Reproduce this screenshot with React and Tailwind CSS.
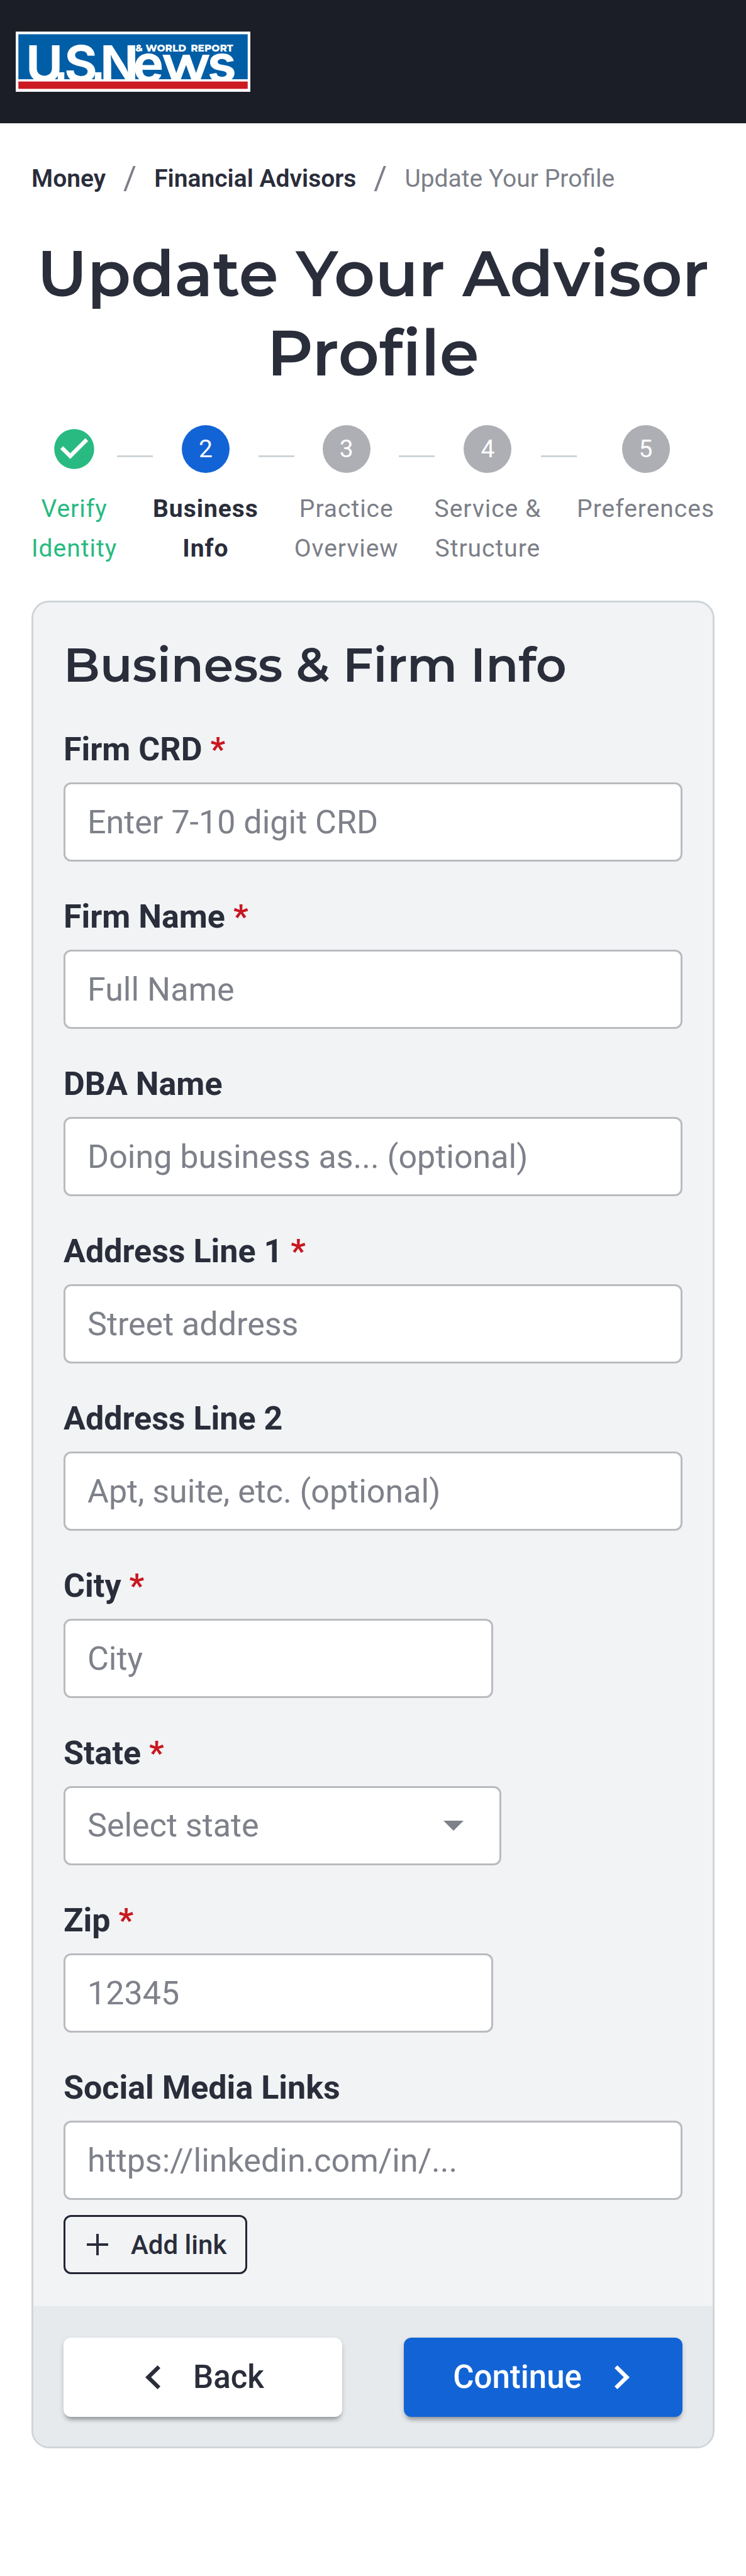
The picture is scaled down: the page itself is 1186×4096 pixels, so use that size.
import React from 'react';

const steps = [
  { label: 'Verify Identity', lines: ['Verify', 'Identity'], status: 'done' },
  { label: 'Business Info', lines: ['Business', 'Info'], status: 'current' },
  { label: 'Practice Overview', lines: ['Practice', 'Overview'], status: 'upcoming' },
  { label: 'Service & Structure', lines: ['Service &', 'Structure'], status: 'upcoming' },
  { label: 'Preferences', lines: ['Preferences'], status: 'upcoming' },
];

const fields = [
  { id: 'firmCrd', label: 'Firm CRD', placeholder: 'Enter 7-10 digit CRD', required: true },
  { id: 'firmName', label: 'Firm Name', placeholder: 'Full Name', required: true },
  { id: 'dbaName', label: 'DBA Name', placeholder: 'Doing business as... (optional)' },
  { id: 'address1', label: 'Address Line 1', placeholder: 'Street address', required: true },
  { id: 'address2', label: 'Address Line 2', placeholder: 'Apt, suite, etc. (optional)' },
  { id: 'city', label: 'City', placeholder: 'City', required: true, short: true },
  { id: 'state', label: 'State', placeholder: 'Select state', required: true, type: 'select' },
  { id: 'zip', label: 'Zip', placeholder: '12345', required: true, short: true },
  { id: 'social', label: 'Social Media Links', placeholder: 'https://linkedin.com/in/...' },
];

const states = ['California', 'Florida', 'New York', 'Texas'];

const labelColors = {
  done: 'text-[#28ba81]',
  current: 'font-bold text-[#2a2d3a]',
  upcoming: 'text-[#7c7f88]',
};

function Logo() {
  return (
    <svg viewBox="0 0 531 136" className="block h-[96px] w-[373px]" role="img" aria-label="U.S. News & World Report">
      <rect width="531" height="136" fill="#fff" />
      <rect x="6" y="6" width="519" height="102" fill="#005ea6" />
      <g fill="#fff">
        <g fontFamily="Inter, sans-serif" fontWeight="700" fontSize="114">
          <text x="23" y="113">U</text>
          <text x="110" y="113">S</text>
          <text x="191" y="113">N</text>
        </g>
        <g fontFamily="Inter, sans-serif" fontWeight="700" fontSize="117">
          <text x="265" y="113">e</text>
          <text x="434" y="113">s</text>
        </g>
        <text x="332" y="113" fontFamily="Montserrat, Inter, sans-serif" fontWeight="700" fontSize="114">w</text>
        <g fontFamily="Montserrat, Inter, sans-serif" fontWeight="800" fontSize="22">
          <text x="271" y="45">&amp;</text>
          <text x="294" y="45">WORLD</text>
          <text x="396" y="45">REPORT</text>
        </g>
        <rect x="95" y="92" width="15" height="18" />
        <rect x="179" y="92" width="15" height="18" />
      </g>
      <rect x="6" y="108" width="519" height="5" fill="#fff" />
      <rect x="6" y="113" width="519" height="17" fill="#cb1a22" />
      <rect x="0" y="130" width="531" height="6" fill="#fff" />
    </svg>
  );
}

function StepIcon({ status, number }) {
  if (status === 'done') {
    return (
      <svg viewBox="0 0 24 24" className="size-[76px] fill-[#28ba81]" aria-hidden="true">
        <path d="M12 2C6.48 2 2 6.48 2 12s4.48 10 10 10 10-4.48 10-10S17.52 2 12 2zm-2 15l-5-5 1.41-1.41L10 14.17l7.59-7.59L19 8l-9 9z" />
      </svg>
    );
  }
  return (
    <span
      className={`flex size-[76px] items-center justify-center rounded-full text-[39px] leading-none text-white ${
        status === 'current' ? 'bg-[#1264d6]' : 'bg-[#adafb5]'
      }`}
    >
      {number}
    </span>
  );
}

function Stepper() {
  return (
    <ol className="mt-[52px] flex items-start">
      {steps.map((step, index) => (
        <React.Fragment key={step.label}>
          {index > 0 && <li aria-hidden="true" className="mt-12 h-[3px] min-w-4 flex-1 bg-[#cfd5d9]" />}
          <li className="flex flex-col items-center gap-[26px]" aria-current={step.status === 'current' ? 'step' : undefined}>
            <StepIcon status={step.status} number={index + 1} />
            <span className={`text-center text-[39px] leading-[63px] tracking-wide ${labelColors[step.status]}`}>
              {step.lines.map((line) => (
                <span key={line} className="block whitespace-nowrap">{line}</span>
              ))}
            </span>
          </li>
        </React.Fragment>
      ))}
    </ol>
  );
}

function Field({ field }) {
  const box =
    'h-[126px] max-w-full rounded-[12px] border-[3px] border-[#b9bbbf] bg-white px-[35px] text-[52px] text-[#7e818a] placeholder:text-[#7e818a] placeholder:opacity-100';

  return (
    <div className="flex flex-col items-start gap-5">
      <label htmlFor={field.id} className="text-[52px] leading-[64px] font-bold">
        {field.label}
        {field.required && <span className="text-[#c91720]"> *</span>}
      </label>
      {field.type === 'select' ? (
        <div className="relative w-[696px] max-w-full">
          <select id={field.id} defaultValue="" className={`${box} w-full appearance-none`}>
            <option value="">{field.placeholder}</option>
            {states.map((state) => (
              <option key={state}>{state}</option>
            ))}
          </select>
          <svg viewBox="0 0 10 5" className="pointer-events-none absolute top-[55px] right-[60px] h-4 w-8 fill-[#7e818a]" aria-hidden="true">
            <path d="M0 0l5 5 5-5z" />
          </svg>
        </div>
      ) : (
        <input
          id={field.id}
          type="text"
          placeholder={field.placeholder}
          className={`${box} ${field.short ? 'w-[683px]' : 'w-full'}`}
        />
      )}
    </div>
  );
}

function Chevron({ direction }) {
  return (
    <svg viewBox="0 0 24 38" className="h-[38px] w-6 fill-current" aria-hidden="true">
      {direction === 'left' ? (
        <path d="M24 4.500 19.500 0 0 19l19.500 19 4.500-4.500L9.200 19z" />
      ) : (
        <path d="M0 4.500 4.500 0 24 19 4.500 38 0 33.500 14.800 19z" />
      )}
    </svg>
  );
}

export default function App() {
  const button =
    'flex h-[126px] flex-1 items-center justify-center gap-[52px] rounded-[12px] text-[51px] font-medium shadow-[0_8px_6px_-4px_rgba(0,0,0,0.25),0_4px_8px_0_rgba(0,0,0,0.16)]';

  return (
    <div className="min-h-screen bg-white font-['Roboto',sans-serif] text-[#2a2d3a]">
      <header className="flex h-[196px] items-center bg-[#1b1e27] px-[25px]">
        <a href="#home">
          <Logo />
        </a>
      </header>

      <main className="px-[50px] pt-[60px] pb-[200px]">
        <nav aria-label="Breadcrumb">
          <ol className="flex items-center gap-7 text-[39px] leading-[56px]">
            <li><a href="#money" className="font-semibold">Money</a></li>
            <li aria-hidden="true" className="text-[51px] text-[#7c7f88]">/</li>
            <li><a href="#advisors" className="font-semibold">Financial Advisors</a></li>
            <li aria-hidden="true" className="text-[51px] text-[#7c7f88]">/</li>
            <li className="text-[#7c7f88]" aria-current="page">Update Your Profile</li>
          </ol>
        </nav>

        <h1 className="mt-[60px] text-center font-['Montserrat','Inter',sans-serif] text-[101px] leading-[126px] font-semibold">
          Update Your Advisor Profile
        </h1>

        <Stepper />

        <form className="mt-[51px] overflow-hidden rounded-[28px] border-[3px] border-[#cfd5d9] bg-[#f1f3f5]">
          <div className="px-12 py-[51px]">
            <h2 className="mb-[55px] font-['Montserrat','Inter',sans-serif] text-[76px] leading-[96px] font-semibold">
              Business &amp; Firm Info
            </h2>
            <div className="flex flex-col gap-14">
              {fields.map((field) => (
                <Field key={field.id} field={field} />
              ))}
            </div>
            <button
              type="button"
              className="mt-6 flex h-[94px] items-center gap-[36px] rounded-[12px] border-[3px] border-[#222532] pr-[30px] pl-[34px] text-[42px] font-medium"
            >
              <svg viewBox="0 0 34 34" className="size-[34px] fill-current" aria-hidden="true">
                <path d="M15 0h4v15h15v4H19v15h-4V19H0v-4h15z" />
              </svg>
              Add link
            </button>
          </div>
          <div className="flex gap-[98px] bg-[#e6eaed] px-12 pt-[50px] pb-[47px]">
            <button type="button" className={`${button} bg-white pl-1.5`}>
              <Chevron direction="left" />
              Back
            </button>
            <button type="submit" className={`${button} bg-[#1264d6] pr-1.5 text-white`}>
              Continue
              <Chevron direction="right" />
            </button>
          </div>
        </form>
      </main>
    </div>
  );
}
